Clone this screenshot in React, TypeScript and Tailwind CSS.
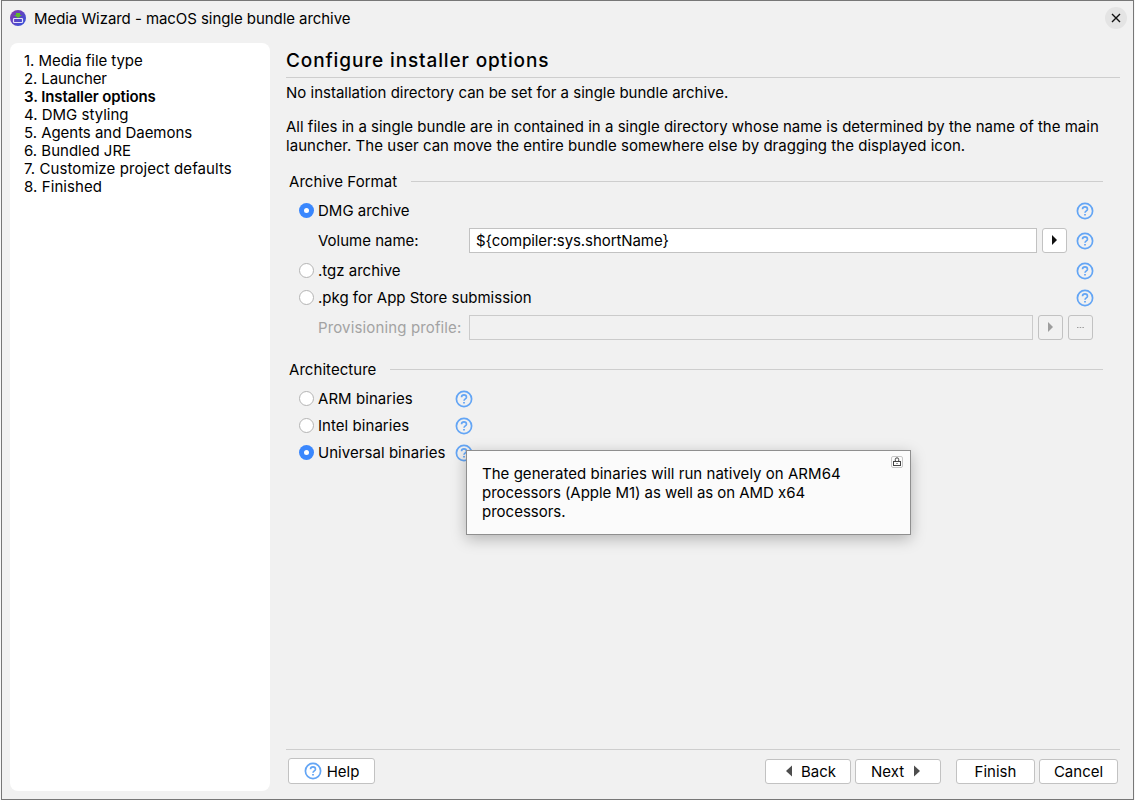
import type { ReactNode } from 'react'
import clsx from 'clsx'

const steps = [
  { label: 'Media file type', className: 'tracking-[-0.06px]' },
  { label: 'Launcher', className: 'tracking-[-0.12px]' },
  { label: 'Installer options', className: 'font-semibold tracking-[-0.1px]' },
  { label: 'DMG styling', className: '' },
  { label: 'Agents and Daemons', className: 'tracking-[-0.04px]' },
  { label: 'Bundled JRE', className: '' },
  { label: 'Customize project defaults', className: 'tracking-[0.09px]' },
  { label: 'Finished', className: 'tracking-[0.08px]' },
]

function AppIcon() {
  return (
    <svg width="16" height="16" viewBox="0 0 16 16" className="mt-px">
      <defs>
        <linearGradient id="appIcon" x1="0" y1="0" x2="1" y2="1">
          <stop offset="0" stopColor="#8a35a8" />
          <stop offset="1" stopColor="#2f55e0" />
        </linearGradient>
      </defs>
      <circle cx="8" cy="8" r="8" fill="url(#appIcon)" />
      <path d="M6 3h4v2h2L8 8 4 5h2z" fill="#5fb82c" />
      <rect x="3.500" y="8.500" width="9" height="4" rx="0.800" fill="none" stroke="#e4e0fa" strokeWidth="1.200" />
    </svg>
  )
}

function HelpIcon() {
  return (
    <svg width="18" height="18" viewBox="0 0 18 18" fill="none" stroke="#63a5f5" className="shrink-0">
      <circle cx="9" cy="9" r="7.600" strokeWidth="1.700" />
      <path d="M6.500 7.300C6.500 5.800 7.600 4.900 9 4.900s2.500.900 2.500 2.300C11.500 8.800 9 8.900 9 10.700" strokeWidth="1.600" />
      <path d="M9 11.900v1.700" strokeWidth="1.800" />
    </svg>
  )
}

function Triangle({ left = false, color }: { left?: boolean; color: string }) {
  return (
    <svg width="6" height="12" viewBox="0 0 6 12" className="mb-px shrink-0">
      <path d={left ? 'M6 0.500v11L0 6z' : 'M0 0.500v11L6 6z'} fill={color} />
    </svg>
  )
}

function SmallTriangle({ color }: { color: string }) {
  return (
    <svg width="5" height="10" viewBox="0 0 5 10" className="mr-px mb-px shrink-0">
      <path d="M0 0v10l5-5z" fill={color} />
    </svg>
  )
}

function Radio({ checked = false, children }: { checked?: boolean; children: ReactNode }) {
  return (
    <div className="flex items-center gap-1 pb-px">
      <span
        className={clsx(
          'flex size-[15px] items-center justify-center rounded-full',
          checked ? 'bg-[#3a87fd]' : 'border border-[#b4b4b4] bg-white'
        )}
      >
        {checked && <span className="size-[5px] rounded-full bg-white" />}
      </span>
      <span>{children}</span>
    </div>
  )
}

function SectionTitle({ children }: { children: ReactNode }) {
  return (
    <div className="flex h-5 items-center gap-[14px] pr-[17px] pl-[3px] tracking-[0.05px]">
      <span>{children}</span>
      <span className="h-px flex-1 bg-[#cecece]" />
    </div>
  )
}

function Button({ className, children }: { className: string; children: ReactNode }) {
  return (
    <button
      className={clsx(
        'flex h-[25px] items-center justify-center rounded-[3px] border border-[#c2c2c2] bg-white',
        className
      )}
    >
      {children}
    </button>
  )
}

export default function App() {
  return (
    <div className="h-[800px] w-[1135px] bg-[#f7f7f7] px-px font-['Inter',sans-serif] text-[15px] leading-[19px] text-black">
      <div className="flex h-full flex-col border border-[#777777] bg-[#f1f1f1]">
        {/* Title bar */}
        <header className="flex h-[42px] shrink-0 items-start justify-between pt-[6px] pr-[6px] pl-2">
          <div className="flex items-start gap-2 pt-[2px]">
            <AppIcon />
            <span className="tracking-[-0.06px]">Media Wizard - macOS single bundle archive</span>
          </div>
          <span className="flex size-[22px] items-center justify-center rounded-full bg-[#e4e4e4]">
            <svg width="10" height="10" viewBox="0 0 10 10" stroke="#111" strokeWidth="1.400">
              <path d="M1 1l8 8M9 1l-8 8" />
            </svg>
          </span>
        </header>

        <div className="flex flex-1 gap-4 pr-[13px] pb-2 pl-2">
          {/* Wizard steps */}
          <aside className="w-[260px] shrink-0 rounded-lg bg-white pt-[9px] pl-[14px] leading-[18px]">
            {steps.map((step, i) => (
              <div key={step.label} className={step.className}>
                {i + 1}. {step.label}
              </div>
            ))}
          </aside>

          <main className="flex flex-1 flex-col">
            <h1 className="h-[35px] border-b border-[#cecece] pt-[6px] text-[19px] leading-6 font-medium tracking-[0.87px]">
              Configure installer options
            </h1>
            <p className="mt-[5px]">No installation directory can be set for a single bundle archive.</p>
            <p className="mt-[15px] mb-[16px] whitespace-nowrap">
              <span className="tracking-[0.01px]">
                All files in a single bundle are in contained in a single directory whose name is determined by the name of the main
              </span>
              <br />
              <span className="tracking-[0.04px]">
                launcher. The user can move the entire bundle somewhere else by dragging the displayed icon.
              </span>
            </p>

            <SectionTitle>Archive Format</SectionTitle>
            <div className="mt-[7px] flex h-[26px] items-center justify-between pr-[26px] pl-[13px]">
              <Radio checked>DMG archive</Radio>
              <HelpIcon />
            </div>
            <div className="mt-1 flex h-[25px] items-center pr-[26px] pl-8">
              <span className="w-[151px]">Volume name:</span>
              <div className="flex h-[25px] flex-1 items-center border border-[#c2c2c2] bg-white px-[6px] tracking-[-0.08px]">
                {'${compiler:sys.shortName}'}
              </div>
              <Button className="mr-[9px] ml-[5px] w-[25px]">
                <SmallTriangle color="#111111" />
              </Button>
              <HelpIcon />
            </div>
            <div className="mt-[5px] flex h-[26px] items-center justify-between pr-[26px] pl-[13px]">
              <Radio>.tgz archive</Radio>
              <HelpIcon />
            </div>
            <div className="mt-px flex h-[26px] items-center justify-between pr-[26px] pl-[13px]">
              <Radio>.pkg for App Store submission</Radio>
              <HelpIcon />
            </div>
            <div className="mt-1 flex h-[25px] items-center pr-[27px] pl-8 text-[#a3a3a3]">
              <span className="w-[151px] tracking-[0.14px]">Provisioning profile:</span>
              <div className="h-[25px] flex-1 border border-[#cbcbcb]" />
              <Button className="ml-[5px] w-[25px] bg-transparent!">
                <SmallTriangle color="#9d9d9d" />
              </Button>
              <Button className="ml-[5px] w-[25px] bg-transparent!">
                <svg width="7" height="1" viewBox="0 0 7 1" fill="#9d9d9d">
                  <path d="M0 0h1.500v1H0zM2.700 0h1.500v1H2.700zM5.400 0h1.500v1H5.400z" />
                </svg>
              </Button>
            </div>

            <div className="mt-[19px]">
              <SectionTitle>Architecture</SectionTitle>
            </div>
            <div className="mt-[7px] flex w-[187px] flex-col gap-px pl-[13px] tracking-[0.05px]">
              <div className="flex h-[26px] items-center justify-between">
                <Radio>ARM binaries</Radio>
                <HelpIcon />
              </div>
              <div className="flex h-[26px] items-center justify-between">
                <Radio>Intel binaries</Radio>
                <HelpIcon />
              </div>
              <div className="relative flex h-[26px] items-center justify-between">
                <Radio checked>Universal binaries</Radio>
                <HelpIcon />
                {/* Tooltip */}
                <div className="absolute top-[10px] left-[167px] flex h-[85px] w-[445px] justify-between border border-[#8f8f8f] bg-[#fbfbfb] pt-[13px] pr-[7px] pl-[15px] tracking-normal shadow-[0_4px_14px_rgba(0,0,0,0.26)]">
                  <p className="whitespace-nowrap">
                    <span className="tracking-[0.03px]">The generated binaries will run natively on ARM64</span>
                    <br />
                    <span className="tracking-[-0.05px]">processors (Apple M1) as well as on AMD x64</span>
                    <br />
                    processors.
                  </p>
                  <svg width="12" height="12" viewBox="0 0 12 12" fill="none" className="-mt-[8px]">
                    <rect x="0.500" y="0.500" width="11" height="11" rx="1.500" stroke="#c6c6c6" />
                    <rect x="2.500" y="5.500" width="7" height="4" stroke="#444" />
                    <path d="M4.300 5.500V3.500a1.700 1.700 0 0 1 3.400 0v2" stroke="#444" />
                    <path d="M6 7v1" stroke="#444" />
                  </svg>
                </div>
              </div>
            </div>

            {/* Wizard buttons */}
            <footer className="mt-auto flex h-[42px] items-start border-t border-[#cecece] pt-[9px] pr-[2px] pl-[2px]">
              <Button className="-mt-px mr-auto h-[26px]! w-[87px] gap-[5px]">
                <HelpIcon />
                Help
              </Button>
              <Button className="w-[86px] gap-[9px] pl-[6px]">
                <Triangle left color="#4d4d4d" />
                Back
              </Button>
              <Button className="ml-1 w-[86px] gap-[10px] pr-[5px]">
                Next
                <Triangle color="#4d4d4d" />
              </Button>
              <Button className="ml-[15px] w-[79px]">Finish</Button>
              <Button className="ml-1 w-[79px]">Cancel</Button>
            </footer>
          </main>
        </div>
      </div>
    </div>
  )
}
